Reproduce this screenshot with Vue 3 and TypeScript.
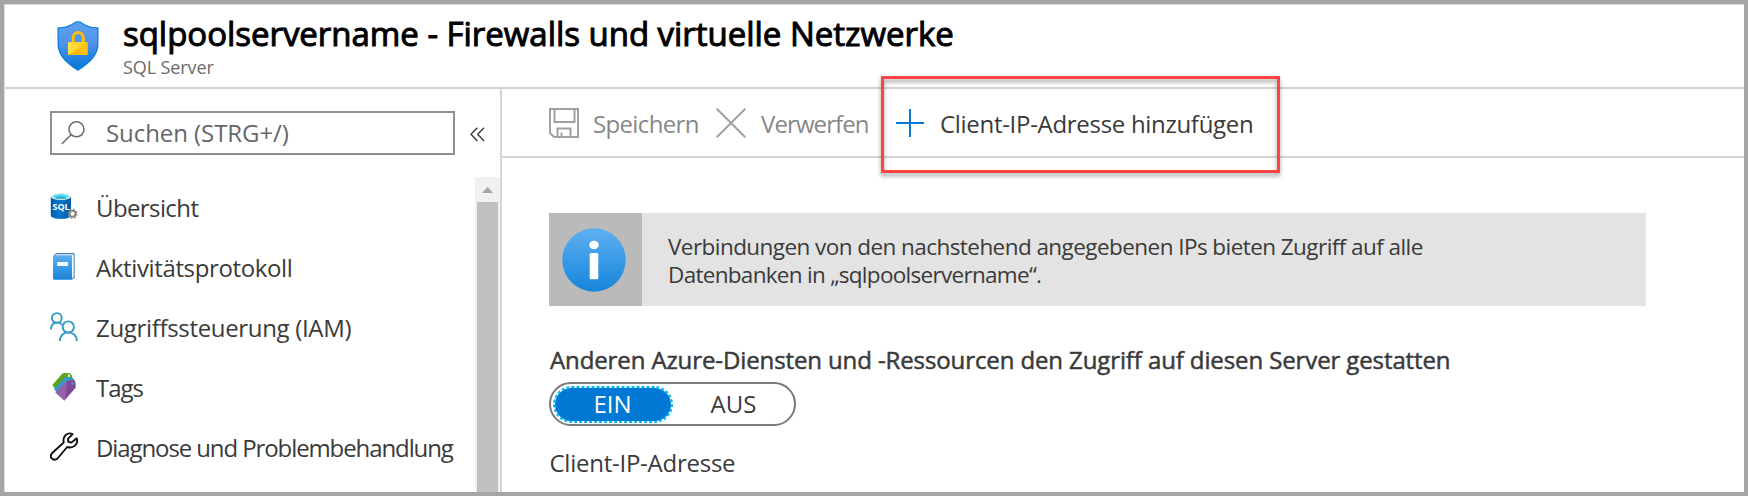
<script setup lang="ts">
interface MenuItem {
  id: string
  label: string
  tracking: number
}

const menu: MenuItem[] = [
  { id: 'overview', label: 'Übersicht', tracking: -0.6 },
  { id: 'log', label: 'Aktivitätsprotokoll', tracking: -0.37 },
  { id: 'iam', label: 'Zugriffssteuerung (IAM)', tracking: -0.33 },
  { id: 'tags', label: 'Tags', tracking: -1 },
  { id: 'diagnose', label: 'Diagnose und Problembehandlung', tracking: -1.1 },
]
</script>

<template>
  <div class="frame">
    <header class="header">
      <svg class="shield" width="42" height="50" viewBox="0 0 42 50">
        <defs>
          <linearGradient id="shieldFill" x1="0" y1="0" x2="0" y2="1">
            <stop offset="0" stop-color="#5ea0ef" />
            <stop offset=".45" stop-color="#5092e8" />
            <stop offset="1" stop-color="#0078d7" />
          </linearGradient>
          <linearGradient id="lockFill" x1="0" y1="0" x2="1" y2="0">
            <stop offset="0" stop-color="#ffe04a" />
            <stop offset="1" stop-color="#ffc81a" />
          </linearGradient>
        </defs>
        <path d="M21 .2C15 .2 15.500 6.200 .5 6.200V23C.5 36 12 44 21 50C30 44 41.500 36 41.500 23V6.200C26.500 6.200 27 .2 21 .2Z" fill="#0f7fdc" />
        <path d="M21 1.600C16 1.600 15.500 7.300 1.800 7.500V23C1.800 35 12.500 42.800 21 48.500C29.500 42.800 40.200 35 40.200 23V7.500C26.500 7.300 26 1.600 21 1.600Z" fill="url(#shieldFill)" />
        <path d="M16.200 22V16.500a5 5 0 0 1 10 0V22" fill="none" stroke="#ffbe05" stroke-width="3" />
        <rect x="11" y="21" width="19.500" height="13" rx="1" fill="url(#lockFill)" />
        <path d="M11.500 34L30.500 21V33a1 1 0 0 1-1 1Z" fill="#ffc411" />
        <path d="M11.500 34L20.700 28L30 34Z" fill="#ffb900" />
      </svg>
      <div class="titles">
        <h1>sqlpoolservername - Firewalls und virtuelle Netzwerke</h1>
        <span class="subtitle">SQL Server</span>
      </div>
    </header>

    <div class="body">
      <aside class="sidebar">
        <div class="search-row">
          <div class="search">
            <svg width="24" height="24" viewBox="0 0 24 24" fill="none" stroke="#696969" stroke-width="1.500">
              <circle cx="15.500" cy="8.300" r="7.500" />
              <path d="M10 13.700L.8 23" />
            </svg>
            <span>Suchen (STRG+/)</span>
          </div>
          <svg class="collapse" width="15" height="15" viewBox="0 0 15 15" fill="none" stroke="#333" stroke-width="1.300">
            <path d="M7.300 .7L1 7.300L7.300 14M14 .7L7.700 7.300L14 14" />
          </svg>
        </div>

        <div class="menu-area">
          <nav class="menu">
            <div v-for="item in menu" :key="item.id" class="menu-item">
              <svg v-if="item.id === 'overview'" width="30" height="30" viewBox="0 0 30 30">
                <defs>
                  <linearGradient id="dbFill">
                    <stop offset="0" stop-color="#005ba1" />
                    <stop offset=".4" stop-color="#0078d4" />
                    <stop offset="1" stop-color="#005ba1" />
                  </linearGradient>
                </defs>
                <path d="M.8 4.500V23.500C.8 28 21 28 21 23.500V4.500Z" fill="url(#dbFill)" />
                <ellipse cx="10.900" cy="4.500" rx="10.100" ry="3.600" fill="#e8e8e8" />
                <ellipse cx="10.900" cy="4.500" rx="8" ry="2.600" fill="#50e6ff" />
                <ellipse cx="10.900" cy="5.500" rx="5.500" ry="1.600" fill="#198ab3" opacity=".55" />
                <text x="2.500" y="18.300" class="sql">SQL</text>
                <circle cx="22.500" cy="21.800" r="3" fill="#fff" stroke="#8a8a8a" stroke-width="2" />
                <circle cx="22.500" cy="21.800" r="4.300" fill="none" stroke="#8a8a8a" stroke-width="1.400" stroke-dasharray="1.700 1.677" />
              </svg>

              <svg v-else-if="item.id === 'log'" width="30" height="30" viewBox="0 0 30 30">
                <defs>
                  <linearGradient id="bookFill" x1="0" y1="0" x2="0" y2="1">
                    <stop offset="0" stop-color="#5eaeef" />
                    <stop offset="1" stop-color="#1784d9" />
                  </linearGradient>
                </defs>
                <path d="M4 3.500L6 1.300H24.500V25.300L22.500 27.500Z" fill="#155ea1" />
                <path d="M5 3L6 2.200H23.700V25L22 26.700Z" fill="#fff" />
                <path d="M3 4.800a1.500 1.500 0 0 1 1.500-1.500H22V27.800H4.500a1.500 1.500 0 0 1-1.500-1.500Z" fill="url(#bookFill)" />
                <rect x="7" y="10" width="11" height="4" rx=".5" fill="#f5faff" />
              </svg>

              <svg v-else-if="item.id === 'iam'" width="30" height="30" viewBox="0 0 30 30" fill="none" stroke="#3999c6" stroke-width="1.900">
                <circle cx="6.800" cy="6" r="4.900" />
                <path d="M.9 17.500C1 10 9.500 8.500 12 13" />
                <circle cx="18.300" cy="15" r="5.600" />
                <path d="M9.900 29C10 17.500 26.600 17.500 26.900 29" />
              </svg>

              <svg v-else-if="item.id === 'tags'" width="30" height="30" viewBox="0 0 30 30">
                <path d="M2.300 13L12.500 1.500Q13.200 .8 14.500 .9L20 1.200L22.500 4L20 8L6 18Z" fill="#59a512" />
                <circle cx="19" cy="3.800" r="1.200" fill="#fff" />
                <path d="M4 17L14.500 5.500Q15.200 4.800 17 4.900L22 5L24.500 8L22 12L7 21Z" fill="#3999c6" />
                <path d="M19.500 5.500L22 5.500L22.500 8Z" fill="#59a512" />
                <path d="M5.500 20.500L17 9Q17.800 8.300 19.300 8.300L23.500 8.200Q25.300 8.200 25.500 10L25.800 15.500L14.500 28.500Z" fill="#804998" />
                <path d="M5.500 20.500L17 9L15 28L14.300 28.500Z" fill="#9660aa" />
                <circle cx="22.500" cy="11.500" r="1.500" fill="#3999c6" />
              </svg>

              <svg v-else width="30" height="30" viewBox="0 0 30 30" fill="none" stroke="#111" stroke-width="1.900" stroke-linejoin="round">
                <path d="M22.600 2.100C17.500-.2 12.400 4 13.700 10.500L2 21.200C-1.500 25.800 4 29.500 7.500 26.500L17.200 15C23 17 28.800 12.300 26.700 6.300L21.500 10.500L18.300 9.900L18 6.800Z" />
              </svg>
              <span :style="{ letterSpacing: item.tracking + 'px' }">{{ item.label }}</span>
            </div>
          </nav>
          <div class="scrollbar">
            <svg width="11" height="6" viewBox="0 0 11 6"><path d="M0 6L5.500 0L11 6Z" fill="#a3a3a3" /></svg>
            <div class="thumb"></div>
          </div>
        </div>
      </aside>

      <main class="content">
        <div class="toolbar">
          <svg class="save" width="30" height="30" viewBox="0 0 30 30" fill="none" stroke="#a0a0a0" stroke-width="2">
            <path d="M1 1H29V29H5L1 25Z" />
            <path d="M5.500 1V14H25.500V1M8.500 29V20.500H21.500V29M12.500 29V24.500" />
          </svg>
          <span class="label save-label">Speichern</span>
          <svg class="discard" width="30" height="30" viewBox="0 0 30 30" fill="none" stroke="#a0a0a0" stroke-width="2">
            <path d="M.7 .7L29.300 29.300M29.300 .7L.7 29.300" />
          </svg>
          <span class="label discard-label">Verwerfen</span>
          <svg class="plus" width="28" height="28" viewBox="0 0 28 28"><path d="M14 0V28M0 14H28" stroke="#0078d4" stroke-width="2" /></svg>
          <span class="label add-label">Client-IP-Adresse hinzufügen</span>
          <div class="highlight"></div>
        </div>

        <div class="info">
          <div class="info-icon">
            <svg width="64" height="64" viewBox="0 0 64 64">
              <defs>
                <linearGradient id="infoFill" x1="0" y1="0" x2="0" y2="1">
                  <stop offset="0" stop-color="#5eb0f2" />
                  <stop offset="1" stop-color="#1685da" />
                </linearGradient>
              </defs>
              <circle cx="32" cy="32" r="31.700" fill="url(#infoFill)" />
              <ellipse cx="32" cy="17" rx="4.800" ry="4.200" fill="#fff" />
              <rect x="27.700" y="25" width="8.600" height="26.300" rx="1.200" fill="#fff" />
            </svg>
          </div>
          <p>
            <span class="line1">Verbindungen von den nachstehend angegebenen IPs bieten Zugriff auf alle</span>
            <span class="line2">Datenbanken in „sqlpoolservername“.</span>
          </p>
        </div>

        <h2>Anderen Azure-Diensten und -Ressourcen den Zugriff auf diesen Server gestatten</h2>
        <div class="toggle">
          <div class="option on">
            <svg width="120" height="37" viewBox="0 0 120 37">
              <rect x="1" y="1" width="118" height="35" rx="17.500" fill="#0078d4" stroke="#fff" stroke-width="2" />
              <rect x="1" y="1" width="118" height="35" rx="17.500" fill="none" stroke="#00bcf2" stroke-width="2" stroke-dasharray="3 2" />
            </svg>
            <span>EIN</span>
          </div>
          <div class="option off"><span>AUS</span></div>
        </div>
        <div class="column-label">Client-IP-Adresse</div>
      </main>
    </div>
    <svg class="edge" width="130" height="3" viewBox="0 0 130 3"><path d="M2 0L14 1.200L90 2H112L122 0Z" fill="#fefefe" /></svg>
  </div>
</template>

<style>
body {
  margin: 0;
}
</style>

<style scoped>
.frame {
  position: relative;
  box-sizing: border-box;
  width: 1748px;
  height: 496px;
  border: 4px solid #a5a5a5;
  background: #fff;
  box-shadow: inset 1px 1px 0 #dcdcdc;
  overflow: hidden;
  color: #3a3a3a;
  font-family: "Open Sans", "Segoe UI", sans-serif;
  font-size: 24px;
  line-height: 30px;
  white-space: nowrap;
}

svg {
  display: block;
  flex: none;
}

.header {
  display: flex;
  box-sizing: border-box;
  height: 85px;
  margin-left: 1px;
  padding-left: 52px;
  border-bottom: 2px solid #d2d2d2;
}

.shield {
  margin-top: 17px;
}

.titles {
  display: flex;
  flex-direction: column;
  margin-left: 24px;
}

h1 {
  margin: 10px 0 0;
  color: #000;
  font-size: 33px;
  font-weight: 400;
  line-height: 40px;
  letter-spacing: -0.03px;
  -webkit-text-stroke: 1px #000;
}

.subtitle {
  margin-top: 3px;
  color: #6b6b6b;
  font-size: 18px;
  line-height: 20px;
  letter-spacing: -0.1px;
}

.body {
  display: flex;
  height: 403px;
}

.sidebar {
  box-sizing: border-box;
  width: 498px;
  padding-top: 22px;
  border-right: 2px solid #d6d6d6;
}

.search-row {
  display: flex;
  align-items: center;
  padding-left: 46px;
}

.search {
  display: flex;
  align-items: center;
  box-sizing: border-box;
  width: 405px;
  height: 44px;
  border: 2px solid #8f8f8f;
  padding-left: 9px;
  color: #666;
}

.search span {
  margin-left: 21px;
  letter-spacing: -0.07px;
}

.collapse {
  margin-left: 15px;
  margin-top: 3px;
}

.menu-area {
  display: flex;
  height: 315px;
  margin-top: 22px;
}

.menu {
  width: 471px;
}

.menu-item {
  display: flex;
  align-items: center;
  height: 60px;
  padding-left: 46px;
}

.menu-item span {
  margin-left: 16px;
  padding-top: 2px;
}

.sql {
  fill: #fff;
  font: 700 9px "Open Sans", sans-serif;
}

.scrollbar {
  display: flex;
  flex-direction: column;
  align-items: center;
  width: 25px;
  background: #f1f1f1;
}

.scrollbar svg {
  margin-top: 10px;
}

.thumb {
  width: 21px;
  flex: 1;
  margin-top: 9px;
  background: #c1c1c1;
}

.content {
  width: 1242px;
}

.toolbar {
  position: relative;
  display: flex;
  align-items: center;
  box-sizing: border-box;
  height: 69px;
  border-bottom: 2px solid #d6d6d6;
  padding-left: 47px;
}

.label {
  padding-top: 2px;
  color: #888;
}

.save-label {
  width: 107px;
  margin-left: 14px;
  letter-spacing: -0.65px;
}

.discard {
  margin-left: 16px;
}

.discard-label {
  width: 110px;
  margin-left: 15px;
  letter-spacing: -0.9px;
}

.plus {
  margin-left: 25px;
}

.add-label {
  margin-left: 16px;
  color: #3a3a3a;
  letter-spacing: -0.3px;
}

.highlight {
  position: absolute;
  left: 379px;
  top: -13px;
  box-sizing: border-box;
  width: 399px;
  height: 97px;
  border: 3px solid #ff4343;
  filter: drop-shadow(0 3px 2px rgba(0, 0, 0, 0.38));
}

.info {
  display: flex;
  width: 1097px;
  height: 93px;
  margin: 55px 0 0 47px;
  background: #e3e3e3;
}

.info-icon {
  display: flex;
  align-items: center;
  box-sizing: border-box;
  width: 93px;
  padding-left: 13px;
  background: #bababa;
}

.info p {
  display: flex;
  flex-direction: column;
  margin: 20px 0 0 26px;
  font-size: 22.5px;
  line-height: 28px;
}

.line1 {
  letter-spacing: -0.56px;
}

.line2 {
  letter-spacing: -0.7px;
}

h2 {
  margin: 39px 0 0 48px;
  font-size: 24px;
  font-weight: 400;
  line-height: 30px;
  letter-spacing: -0.11px;
  -webkit-text-stroke: 0.5px #3a3a3a;
}

.toggle {
  display: flex;
  align-items: center;
  box-sizing: border-box;
  width: 247px;
  height: 44px;
  margin: 7px 0 0 47px;
  padding-left: 1px;
  border: 2px solid #7a7a7a;
  border-radius: 22px;
}

.option {
  display: grid;
  place-items: center;
  width: 121px;
  height: 37px;
}

.option > * {
  grid-area: 1 / 1;
}

.on span {
  z-index: 1;
  color: #fff;
}

.column-label {
  margin: 22px 0 0 47.5px;
  letter-spacing: -0.25px;
}

.edge {
  position: absolute;
  left: 921px;
  top: 488px;
}
</style>
